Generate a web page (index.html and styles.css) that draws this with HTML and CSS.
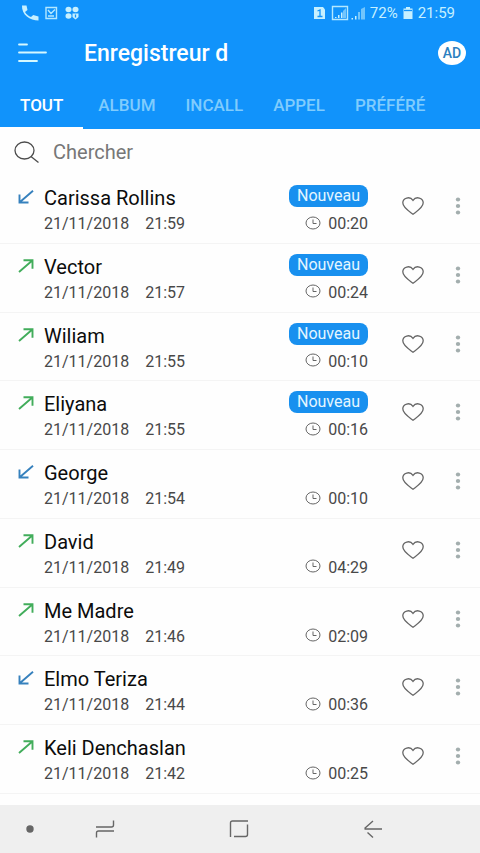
FILE: index.html
```html
<!DOCTYPE html>
<html lang="fr">
<head>
<meta charset="utf-8">
<meta name="viewport" content="width=device-width, initial-scale=1">
<title>Enregistreur d'appels</title>
<link rel="stylesheet" href="styles.css">
</head>
<body>
<svg class="defs" aria-hidden="true">
  <symbol id="in" viewBox="0 0 16 14"><path d="M15 .8 2 12M1.500 4.500v8h9"/></symbol>
  <symbol id="out" viewBox="0 0 16 14"><path d="M1 13 14 1.800M5.500 1.300h9v8.500"/></symbol>
  <symbol id="clock" viewBox="0 0 16 14"><ellipse cx="8" cy="7" rx="7" ry="6"/><path d="M8 3.500v4h3.500"/></symbol>
  <symbol id="heart" viewBox="0 0 22 18"><path d="M11 17.200C7 14.200.8 10.500.8 5.800.8 1 7.800-1.300 11 3.400 14.200-1.300 21.200 1 21.200 5.800c0 4.700-6.200 8.400-10.200 11.400z"/></symbol>
  <symbol id="dots" viewBox="0 0 6 18"><ellipse cx="3" cy="2.500" rx="2.200" ry="1.900"/><ellipse cx="3" cy="9" rx="2.200" ry="1.900"/><ellipse cx="3" cy="15.500" rx="2.200" ry="1.900"/></symbol>
</svg>

<header class="header">
  <div class="status">
    <svg class="status-left" width="60" height="18" viewBox="0 0 60 18" aria-hidden="true">
      <path class="fill" d="M1 1.500h4.500l1 4.500-2.500 2c1.500 2.500 3.500 4 6 5l2.200-2 5.300 1.500v4C9 16.500.5 11 1 1.500z"/>
      <path class="line" d="M25 3.500h10.500v11H25zM27 6l3 3.500 4-4M27 12h6"/>
      <ellipse class="fill" cx="47.500" cy="5.500" rx="3" ry="2.700"/><ellipse class="fill" cx="54.500" cy="5.500" rx="3" ry="2.700"/>
      <ellipse class="fill" cx="47.500" cy="12" rx="3" ry="2.700"/><path class="fill" d="M51.500 9.500h6V13l-3 2.500-3-2.500z"/><path class="cut" d="M54.500 10.500v3"/>
    </svg>
    <div class="status-right">
      <svg width="52" height="18" viewBox="0 0 52 18" aria-hidden="true">
        <path class="fill" d="M1 3h9l2 2.500V15H1z"/><path class="cut" d="M4.500 7 7 6v6.500M4.500 12.500h5"/>
        <path class="line" d="M19.500 2.500h15v13h-15z"/>
        <path class="fill" d="M22 13h1.500v1H22zM25 11h1.500v3H25zM28 8.500h1.500V14H28z"/><path class="dim" d="M30 7l3-3v10h-3z"/>
        <path class="fill" d="M38.500 14h1.500v1.500h-1.500zM42 12h1.500v3.500H42z"/><path class="dim" d="M45 8h2v7.500h-2zM48 5l4-2v12.500h-4z"/>
      </svg>
      <span>72%</span>
      <svg width="10" height="14" viewBox="0 0 10 14" aria-hidden="true"><path class="fill" d="M3 1h4v1.500h2.500V13h-9V2.500H3z"/><path class="cut" d="M1 4.500h8"/></svg>
      <span>21:59</span>
    </div>
  </div>
  <div class="bar">
    <button class="menu" type="button" aria-label="Menu"><svg width="30" height="20" viewBox="0 0 30 20"><path d="M1 1.500h8M1 9.500h27M1 18h18"/></svg></button>
    <h1>Enregistreur d</h1>
    <button class="ad" type="button">AD</button>
  </div>
  <nav class="tabs">
    <a class="active" href="#tout" aria-current="page">TOUT</a>
    <a href="#album">ALBUM</a>
    <a href="#incall">INCALL</a>
    <a href="#appel">APPEL</a>
    <a href="#prefere">PRÉFÉRÉ</a>
  </nav>
</header>

<label class="search">
  <svg width="26" height="22" viewBox="0 0 26 22" aria-hidden="true"><ellipse cx="10.500" cy="9.500" rx="9.500" ry="8.500"/><path d="M17 15.500l7.500 6"/></svg>
  <input type="search" placeholder="Chercher" aria-label="Chercher">
</label>

<ul class="calls">
  <li class="call">
    <svg class="arrow in"><use href="#in"/></svg>
    <div class="who"><h2>Carissa Rollins</h2><p><span>21/11/2018</span><span>21:59</span></p></div>
    <div class="info"><span class="badge">Nouveau</span><p><svg class="clock"><use href="#clock"/></svg>00:20</p></div>
    <button class="fav" type="button" aria-label="Favori"><svg><use href="#heart"/></svg></button>
    <button class="more" type="button" aria-label="Options"><svg><use href="#dots"/></svg></button>
  </li>
  <li class="call">
    <svg class="arrow out"><use href="#out"/></svg>
    <div class="who"><h2>Vector</h2><p><span>21/11/2018</span><span>21:57</span></p></div>
    <div class="info"><span class="badge">Nouveau</span><p><svg class="clock"><use href="#clock"/></svg>00:24</p></div>
    <button class="fav" type="button" aria-label="Favori"><svg><use href="#heart"/></svg></button>
    <button class="more" type="button" aria-label="Options"><svg><use href="#dots"/></svg></button>
  </li>
  <li class="call">
    <svg class="arrow out"><use href="#out"/></svg>
    <div class="who"><h2>Wiliam</h2><p><span>21/11/2018</span><span>21:55</span></p></div>
    <div class="info"><span class="badge">Nouveau</span><p><svg class="clock"><use href="#clock"/></svg>00:10</p></div>
    <button class="fav" type="button" aria-label="Favori"><svg><use href="#heart"/></svg></button>
    <button class="more" type="button" aria-label="Options"><svg><use href="#dots"/></svg></button>
  </li>
  <li class="call">
    <svg class="arrow out"><use href="#out"/></svg>
    <div class="who"><h2>Eliyana</h2><p><span>21/11/2018</span><span>21:55</span></p></div>
    <div class="info"><span class="badge">Nouveau</span><p><svg class="clock"><use href="#clock"/></svg>00:16</p></div>
    <button class="fav" type="button" aria-label="Favori"><svg><use href="#heart"/></svg></button>
    <button class="more" type="button" aria-label="Options"><svg><use href="#dots"/></svg></button>
  </li>
  <li class="call">
    <svg class="arrow in"><use href="#in"/></svg>
    <div class="who"><h2>George</h2><p><span>21/11/2018</span><span>21:54</span></p></div>
    <div class="info"><p><svg class="clock"><use href="#clock"/></svg>00:10</p></div>
    <button class="fav" type="button" aria-label="Favori"><svg><use href="#heart"/></svg></button>
    <button class="more" type="button" aria-label="Options"><svg><use href="#dots"/></svg></button>
  </li>
  <li class="call">
    <svg class="arrow out"><use href="#out"/></svg>
    <div class="who"><h2>David</h2><p><span>21/11/2018</span><span>21:49</span></p></div>
    <div class="info"><p><svg class="clock"><use href="#clock"/></svg>04:29</p></div>
    <button class="fav" type="button" aria-label="Favori"><svg><use href="#heart"/></svg></button>
    <button class="more" type="button" aria-label="Options"><svg><use href="#dots"/></svg></button>
  </li>
  <li class="call">
    <svg class="arrow out"><use href="#out"/></svg>
    <div class="who"><h2>Me Madre</h2><p><span>21/11/2018</span><span>21:46</span></p></div>
    <div class="info"><p><svg class="clock"><use href="#clock"/></svg>02:09</p></div>
    <button class="fav" type="button" aria-label="Favori"><svg><use href="#heart"/></svg></button>
    <button class="more" type="button" aria-label="Options"><svg><use href="#dots"/></svg></button>
  </li>
  <li class="call">
    <svg class="arrow in"><use href="#in"/></svg>
    <div class="who"><h2>Elmo Teriza</h2><p><span>21/11/2018</span><span>21:44</span></p></div>
    <div class="info"><p><svg class="clock"><use href="#clock"/></svg>00:36</p></div>
    <button class="fav" type="button" aria-label="Favori"><svg><use href="#heart"/></svg></button>
    <button class="more" type="button" aria-label="Options"><svg><use href="#dots"/></svg></button>
  </li>
  <li class="call">
    <svg class="arrow out"><use href="#out"/></svg>
    <div class="who"><h2>Keli Denchaslan</h2><p><span>21/11/2018</span><span>21:42</span></p></div>
    <div class="info"><p><svg class="clock"><use href="#clock"/></svg>00:25</p></div>
    <button class="fav" type="button" aria-label="Favori"><svg><use href="#heart"/></svg></button>
    <button class="more" type="button" aria-label="Options"><svg><use href="#dots"/></svg></button>
  </li>
</ul>

<footer class="keys">
  <button class="dot" type="button" aria-label="Afficher la barre"><svg width="8" height="8" viewBox="0 0 8 8"><circle cx="4" cy="4" r="3"/></svg></button>
  <button type="button" aria-label="Applications récentes"><svg width="20" height="18" viewBox="0 0 20 18"><path d="M1 7h15.500q2 0 2-2V.5M19 11H3.500q-2 0-2 2v4.500"/></svg></button>
  <button type="button" aria-label="Accueil"><svg width="20" height="18" viewBox="0 0 20 18"><path d="M1.500 17V3q0-2 2-2h15.500M18.500 4.500v10q0 2-2 2H5"/></svg></button>
  <button type="button" aria-label="Retour"><svg width="20" height="18" viewBox="0 0 20 18"><path d="M19 9H1.500M10 1 1.500 8.500M4.500 12.500l5.500 5"/></svg></button>
</footer>
</body>
</html>
```
FILE: styles.css
```css
* {
  box-sizing: border-box;
  margin: 0;
  padding: 0;
}

body {
  display: flex;
  flex-direction: column;
  min-height: 100vh;
  background: #fefefe;
  color: #0c0c0c;
  font-family: Roboto, "Liberation Sans", sans-serif;
}

.defs {
  display: none;
}

svg {
  display: block;
  flex: none;
  fill: none;
  overflow: visible;
}

button {
  display: flex;
  align-items: center;
  justify-content: center;
  border: 0;
  background: none;
  font: inherit;
  cursor: pointer;
}

.header {
  background: #1193fb;
  color: #fff;
}

.status {
  display: flex;
  justify-content: space-between;
  align-items: center;
  height: 25px;
  padding: 0 25px 0 21px;
  color: #c6f0ff;
  font-size: 15px;
}

.status-right {
  display: flex;
  align-items: center;
  gap: 5px;
}

.status .fill {
  fill: #c6f0ff;
}

.status .dim {
  fill: #72c5fc;
}

.status .line {
  stroke: #b4e8ff;
  stroke-width: 1.4;
}

.status .cut {
  stroke: #1193fb;
  stroke-width: 1.3;
}

.bar {
  display: flex;
  align-items: center;
  height: 56px;
  padding: 0 14px 0 18px;
}

.menu {
  margin-right: 36px;
}

.menu svg {
  stroke: #d5f8ff;
  stroke-width: 1.8;
  stroke-linecap: round;
}

h1 {
  flex: 1;
  font-size: 23px;
  font-weight: 500;
}

.ad {
  width: 28px;
  height: 24px;
  border-radius: 50%;
  background: #fff;
  color: #2b7fc0;
  font-size: 14px;
  font-weight: 500;
}

.tabs {
  display: flex;
  height: 48px;
  font-size: 17px;
  font-weight: 500;
}

.tabs a {
  display: flex;
  align-items: center;
  padding: 2px 15px 0;
  border-bottom: 2px solid transparent;
  color: #80ccfd;
  text-decoration: none;
}

.tabs .active {
  padding: 2px 20px 0;
  border-color: #fff;
  color: #fff;
}

.search {
  display: flex;
  align-items: center;
  gap: 13px;
  height: 46px;
  padding: 0 14px;
}

.search svg {
  stroke: #4c4c4c;
  stroke-width: 1.3;
}

.search input {
  flex: 1;
  min-width: 0;
  border: 0;
  outline: 0;
  background: none;
  font: inherit;
  font-size: 20px;
}

.search input::placeholder {
  color: #777;
}

.calls {
  flex: 1;
  display: grid;
  grid-auto-rows: minmax(64px, 1fr);
  margin-bottom: 11px;
  list-style: none;
}

.call {
  display: flex;
  align-items: flex-start;
  padding: 10px 10px 0 18px;
  border-bottom: 1px solid #f4f4f4;
}

.arrow {
  width: 16px;
  height: 14px;
  margin: 5px 10px 0 0;
  stroke-width: 1.9;
}

.in {
  stroke: #3681bd;
}

.out {
  stroke: #42ad5b;
}

.who {
  flex: 1;
}

h2 {
  font-size: 20px;
  font-weight: 400;
  line-height: 26px;
}

.call p {
  display: flex;
  align-items: center;
  color: #484848;
  font-size: 16px;
  line-height: 26px;
}

.who p {
  gap: 16px;
}

.info {
  display: flex;
  flex-direction: column;
  align-items: flex-end;
  justify-content: flex-end;
  height: 52px;
}

.info p {
  gap: 7px;
}

.badge {
  margin-bottom: 4px;
  padding: 0 8px;
  border-radius: 8px;
  background: #1890ef;
  color: #e4f6ff;
  font-size: 16px;
  line-height: 22px;
}

.clock {
  width: 16px;
  height: 14px;
  margin-bottom: 3px;
  stroke: #666;
}

.fav {
  width: 44px;
  height: 42px;
  margin-left: 23px;
}

.fav svg {
  width: 22px;
  height: 18px;
  stroke: #666;
  stroke-width: 1.3;
}

.more {
  width: 24px;
  height: 42px;
  margin-left: 11px;
}

.more svg {
  width: 6px;
  height: 18px;
  fill: #a3aeae;
}

.keys {
  display: grid;
  grid-template-columns: 16px 1fr 1fr 1fr;
  height: 48px;
  padding: 0 40px 0 22px;
  background: #efefef;
}

.keys svg {
  stroke: #666;
  stroke-width: 1.4;
}

.keys .dot svg {
  fill: #666;
}
```
